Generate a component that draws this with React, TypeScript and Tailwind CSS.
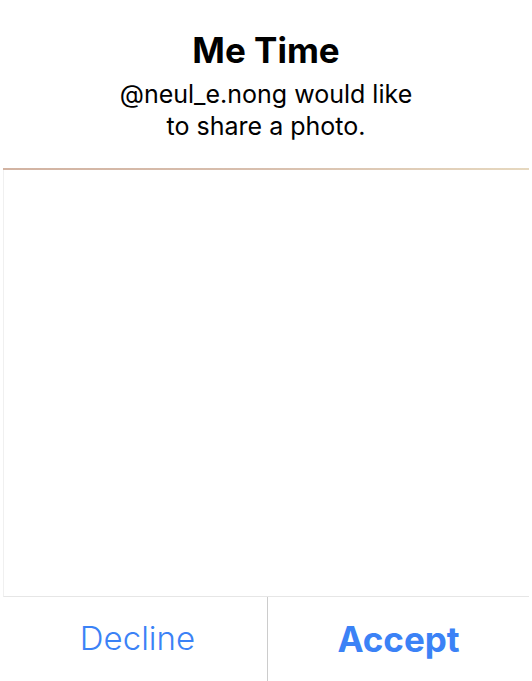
export default function App() {
  return (
    <div className="w-[532px] h-[681px] bg-white flex flex-col font-['Inter',sans-serif] overflow-hidden">
      {/* Header */}
      <div className="h-[168px] flex flex-col items-center pt-[30px]">
        <h1 className="text-[35px] leading-[40px] font-bold text-black">Me Time</h1>
        <p className="mt-[8px] text-[25px] leading-[32px] text-black text-center">
          @neul_e.nong would like
          <br />
          to share a photo.
        </p>
      </div>

      {/* Photo */}
      <div className="mx-[3px] h-[429px] flex flex-col">
        <div className="h-[2px] bg-gradient-to-r from-[#d2b3a2] via-[#d8bfae] to-[#e6d8bf]" />
        <div className="flex-1 bg-white border-l border-[#f0f0f0] border-b border-b-[#e6e6e6]" />
      </div>

      {/* Actions */}
      <div className="mx-[3px] flex-1 flex">
        <button className="flex-1 flex items-center justify-center pl-[5px] text-[33px] text-[#3b82f6] font-light">
          Decline
        </button>
        <div className="w-px bg-[#cccccc]" />
        <button className="w-[261px] flex items-center justify-center text-[35px] text-[#3b82f6] font-bold">
          Accept
        </button>
      </div>
    </div>
  );
}
